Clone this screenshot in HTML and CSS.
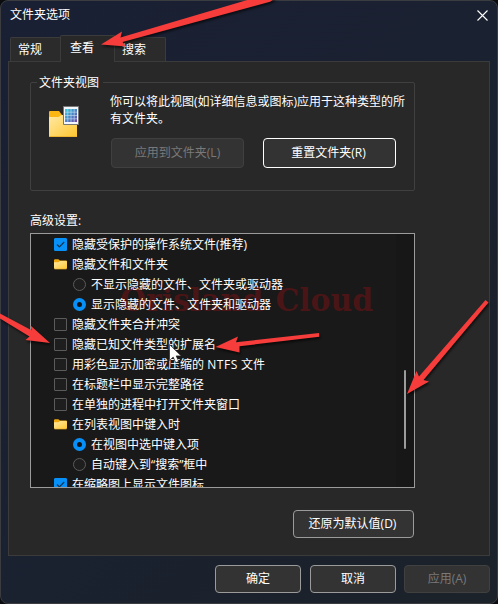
FILE: index.html
```html
<!DOCTYPE html>
<html lang="zh-CN">
<head>
<meta charset="utf-8">
<title>文件夹选项</title>
<link rel="stylesheet" href="styles.css">
</head>
<body>
<svg class="defs" width="0" height="0" aria-hidden="true">
  <defs>
    <linearGradient id="fold" x1="0" y1="0" x2="1" y2="1"><stop offset="0" stop-color="#ffe9a6"/><stop offset="1" stop-color="#ffc72e"/></linearGradient>
    <linearGradient id="cells" x1="0" y1="0" x2="1" y2="1"><stop offset="0" stop-color="#36d3de"/><stop offset=".5" stop-color="#4a86c4"/><stop offset="1" stop-color="#7444a8"/></linearGradient>
    <symbol id="folder" viewBox="0 0 13 11">
      <path d="M0 1.2Q0 .2 1 .2h3.400l1.500 1.300H12q1 0 1 1V6H0z" fill="#f2a90c"/>
      <path d="M0 3.300h4.500l1.300-1.200H12q1 0 1 1v6q0 1-1 1H1q-1 0-1-1z" fill="url(#fold)"/>
      <path d="M.5 10.100h12" stroke="#dc9c1a" stroke-width=".6"/>
    </symbol>
    <symbol id="check" viewBox="0 0 13 13"><path d="M3 6.500l2.400 2.400L10.200 4" fill="none" stroke="#12344f" stroke-width="1.200"/></symbol>
  </defs>
</svg>
<main class="dialog">
  <header class="titlebar">
    <span>文件夹选项</span>
    <svg class="close" width="11" height="11" viewBox="0 0 11 11"><path d="M.5.5l10 10M10.500.5l-10 10" stroke="#fff" stroke-width="1.100"/></svg>
  </header>
  <nav class="tabs">
    <span class="tab general">常规</span><span class="tab selected">查看</span><span class="tab search">搜索</span>
  </nav>
  <section class="panel">
    <section class="group">
      <h2 class="legend">文件夹视图</h2>
      <svg class="viewicon" width="31" height="32" viewBox="0 0 31 32">
        <path d="M0 6q0-1 1-1h9l3 4h14q1 0 1 1v8H0z" fill="#fcb713"/>
        <path d="M0 11h9.500l3-2H28v22H0z" fill="url(#fold)"/>
        <path d="M0 30.500h28" stroke="#efb52f"/>
        <path d="M14.500.5h15v18h-15z" fill="#f3f6fa" stroke="#777"/>
        <path d="M16 3h12v13H16z" fill="url(#cells)"/>
        <path d="M18.800 3v13M22 3v13M25.200 3v13M16 6.200h12M16 9.500h12M16 12.800h12" stroke="#b9d6ee" stroke-width=".7"/>
      </svg>
      <div class="groupbody">
        <p>你可以将此视图(如详细信息或图标)应用于这种类型的所有文件夹。</p>
        <div class="groupbuttons"><button class="btn" disabled>应用到文件夹(L)</button><button class="btn focused">重置文件夹(R)</button></div>
      </div>
    </section>
    <h2 class="label">高级设置:</h2>
    <div class="list">
      <svg class="watermark" width="260" height="34" viewBox="0 0 260 34"><text x="0" y="27" textLength="253" lengthAdjust="spacingAndGlyphs">Orisland Cloud</text></svg>
      <ul>
        <li><i class="box on"><svg><use href="#check"/></svg></i>隐藏受保护的操作系统文件(推荐)</li>
        <li><svg class="folder"><use href="#folder"/></svg>隐藏文件和文件夹</li>
        <li class="sub"><i class="radio"></i>不显示隐藏的文件、文件夹或驱动器</li>
        <li class="sub"><i class="radio on"></i>显示隐藏的文件、文件夹和驱动器</li>
        <li><i class="box"></i>隐藏文件夹合并冲突</li>
        <li><i class="box"></i>隐藏已知文件类型的扩展名</li>
        <li class="latin"><i class="box"></i>用彩色显示加密或压缩的 <span>NTFS</span> 文件</li>
        <li><i class="box"></i>在标题栏中显示完整路径</li>
        <li><i class="box"></i>在单独的进程中打开文件夹窗口</li>
        <li><svg class="folder"><use href="#folder"/></svg>在列表视图中键入时</li>
        <li class="sub"><i class="radio on"></i>在视图中选中键入项</li>
        <li class="sub"><i class="radio"></i>自动键入到“搜索”框中</li>
        <li><i class="box on"><svg><use href="#check"/></svg></i>在缩略图上显示文件图标</li>
      </ul>
      <div class="scrollbar"><div class="thumb"></div></div>
    </div>
    <button class="btn restore">还原为默认值(D)</button>
  </section>
  <footer class="actions"><button class="btn">确定</button><button class="btn">取消</button><button class="btn" disabled>应用(A)</button></footer>
</main>
<svg class="annotations" width="498" height="604" viewBox="0 0 498 604">
  <g class="arrows">
    <path d="M254-2H276L270 1.800 122.500 42 126 46.500 101 44.500 122 31.500 120.500 37.500z"/>
    <path d="M0 313.500L31.500 330.300 30.500 325.500 50 343 25.500 340 29.500 336.500 0 318.500z"/>
    <path d="M319 333L319.300 336.800 239.500 346.200 239.500 352.500 215.500 347 238 336.500 236 342.200z"/>
    <path d="M485.500 300L488.500 302.500 423.500 380 429 381.500 407 394 416.500 371 419 376.500z"/>
  </g>
  <path class="cursor" d="M169.500 344.500v16l3.700-3.400 2.500 5.600 3-1.300-2.500-5.500h5z"/>
</svg>
</body>
</html>
```

FILE: styles.css
```css
* { box-sizing: border-box; }
body { margin: 0; background: #0b0c0f; color: #fff; font: 12px/18px "Open Sans", "Noto Sans CJK SC", sans-serif; }
p, h2, ul { margin: 0; padding: 0; font: inherit; }
.defs { position: absolute; }
.dialog { width: 498px; height: 604px; border: 1px solid #3a3c3f; border-radius: 8px; background: linear-gradient(135deg, #1a2034 0%, #1a2130 50%, #1b2229 100%); display: flex; flex-direction: column; padding: 0 7px; }
.titlebar { height: 34px; flex: none; display: flex; justify-content: space-between; align-items: flex-start; padding: 5px 2px 0; }
.close { margin-top: 4px; }
.tabs { height: 26px; flex: none; display: flex; align-items: flex-end; padding-left: 2px; }
.tab { height: 24px; border: 1px solid #3b3b3b; border-bottom: 0; background: #2b2b2b; padding: 3px 0 0 7px; border-radius: 2px 2px 0 0; }
.general { width: 51px; }
.selected { width: 55px; height: 27px; margin: 0 0 -1px -1px; padding: 3px 0 0 9px; background: #282828; z-index: 1; }
.search { width: 51px; border-left: 0; padding-left: 7px; }
.panel { width: 482px; height: 495px; flex: none; border: 1px solid #3b3b3b; background: #282828; display: flex; flex-direction: column; align-items: flex-start; padding: 20px 0 0 21px; }
.group { width: 385px; height: 109px; flex: none; border: 1px solid #404040; border-radius: 2px; display: flex; flex-wrap: wrap; align-content: flex-start; padding-left: 5px; }
.legend { width: 66px; height: 18px; margin: -9px 300px 0 1px; padding-left: 2px; background: #282828; }
.viewicon { flex: none; margin: 14px 30px 0 13px; }
.groupbody { width: 303px; padding-top: 1px; }
.groupbody p { line-height: 17px; width: 300px; word-break: break-all; }
.groupbuttons { display: flex; gap: 19px; margin: 11px 0 0 1px; }
.groupbuttons .btn { width: 133px; height: 30px; }
.btn { font: inherit; color: #fff; background: #333; border: 1px solid #9b9b9b; border-radius: 4px; padding: 0; margin: 0; }
.btn:disabled { color: #797979; border-color: #404040; }
.btn.focused { border-color: #fff; padding-right: 2px; }
.label { margin: 21px 0 3px; }
.list { position: relative; width: 385px; height: 255px; flex: none; border: 1px solid #9b9b9b; background: #191919; overflow: hidden; display: flex; justify-content: space-between; }
.watermark { position: absolute; left: 89px; top: 50px; }
.watermark text { font: bold 31px "DejaVu Serif", serif; word-spacing: 2px; fill: #4a1517; }
ul { list-style: none; position: relative; margin-left: 23px; }
li { height: 20px; line-height: 18px; padding-top: 1px; display: flex; align-items: center; gap: 5px; white-space: nowrap; }
li.latin { white-space: pre; gap: 0; }
.latin .box { margin-right: 5px; }
.latin span { letter-spacing: .6px; }
.sub { padding-left: 19px; }
.box, .radio { width: 13px; height: 13px; flex: none; margin-top: -1px; border: 1px solid #5b5b5b; background: #1e1e1e; }
.box { border-radius: 1px; }
.box svg { display: block; width: 13px; height: 13px; margin: -1px; }
.box.on { background: #0791f8; border-color: #0791f8; }
.radio { border-radius: 50%; }
.radio.on { border: 4px solid #0791f8; background: #111; }
.folder { width: 13px; height: 11px; flex: none; margin-top: -1px; }
.scrollbar { width: 18px; background: #171717; padding: 136px 0 0 8px; }
.thumb { width: 2px; height: 79px; background: #9b9b9b; border-radius: 1px; }
.restore { width: 121px; height: 28px; margin: 22px 0 0 263px; padding-right: 2px; }
.actions { display: flex; justify-content: flex-end; margin-top: 9px; }
.actions .btn { width: 86px; height: 28px; margin-left: 9px; }
.actions .btn:last-child { margin-left: 8px; }
.annotations { position: absolute; left: 0; top: 0; z-index: 2; pointer-events: none; }
.arrows { fill: #f63d3b; filter: drop-shadow(1px 2px 1px #0009); }
.cursor { fill: #fff; stroke: #222; stroke-width: .7; }
```
